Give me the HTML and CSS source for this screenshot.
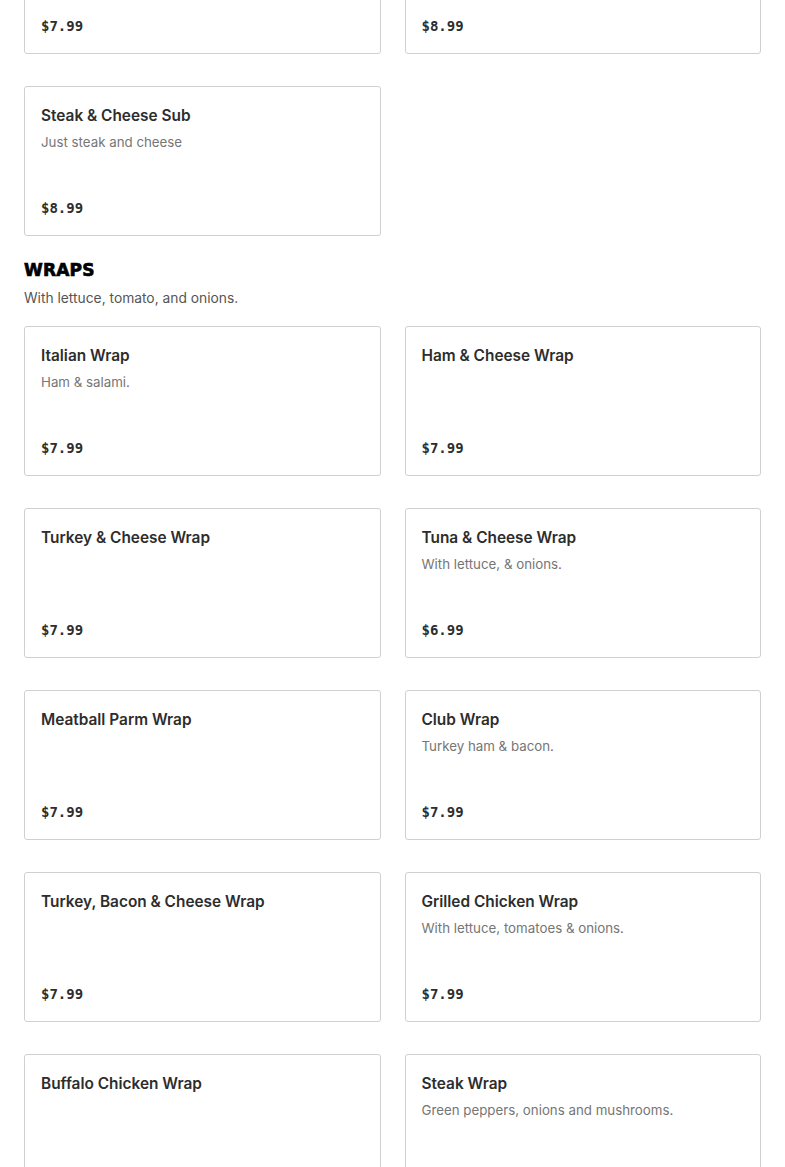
FILE: index.html
```html
<!DOCTYPE html>
<html>
<head>
<meta charset="utf-8">
<link rel="stylesheet" href="styles.css">
</head>
<body>
<main class="menu">
  <section class="section section-first">
    <div class="grid">
      <div class="card"><div class="title">Cheese Steak Sub</div><div class="desc">With peppers and onions</div><div class="price">$7.99</div></div>
      <div class="card"><div class="title">Chicken Cheese Steak Sub</div><div class="desc">With peppers and onions</div><div class="price">$8.99</div></div>
      <div class="card"><div class="title">Steak &amp; Cheese Sub</div><div class="desc">Just steak and cheese</div><div class="price">$8.99</div></div>
    </div>
  </section>
  <section class="section">
    <h2 class="section-title">WRAPS</h2>
    <p class="section-desc">With lettuce, tomato, and onions.</p>
    <div class="grid">
      <div class="card"><div class="title">Italian Wrap</div><div class="desc">Ham &amp; salami.</div><div class="price">$7.99</div></div>
      <div class="card"><div class="title">Ham &amp; Cheese Wrap</div><div class="price">$7.99</div></div>
      <div class="card"><div class="title">Turkey &amp; Cheese Wrap</div><div class="price">$7.99</div></div>
      <div class="card"><div class="title">Tuna &amp; Cheese Wrap</div><div class="desc">With lettuce, &amp; onions.</div><div class="price">$6.99</div></div>
      <div class="card"><div class="title">Meatball Parm Wrap</div><div class="price">$7.99</div></div>
      <div class="card"><div class="title">Club Wrap</div><div class="desc">Turkey ham &amp; bacon.</div><div class="price">$7.99</div></div>
      <div class="card"><div class="title">Turkey, Bacon &amp; Cheese Wrap</div><div class="price">$7.99</div></div>
      <div class="card"><div class="title">Grilled Chicken Wrap</div><div class="desc">With lettuce, tomatoes &amp; onions.</div><div class="price">$7.99</div></div>
      <div class="card"><div class="title">Buffalo Chicken Wrap</div><div class="price">$7.99</div></div>
      <div class="card"><div class="title">Steak Wrap</div><div class="desc">Green peppers, onions and mushrooms.</div><div class="price">$8.99</div></div>
    </div>
  </section>
</main>
</body>
</html>
```
FILE: styles.css
```css
html, body {
  margin: 0;
  padding: 0;
  background: #fff;
  overflow: hidden;
}
body {
  font-family: Inter, "Liberation Sans", sans-serif;
  color: #2d2d2d;
}
.menu {
  padding: 0 24px;
}
.section-first {
  margin-top: -96px;
}
.grid {
  display: grid;
  grid-template-columns: 1fr 1fr;
  column-gap: 24px;
  row-gap: 32px;
}
.card {
  box-sizing: border-box;
  height: 150px;
  border: 1px solid #d0d0d0;
  border-radius: 3px;
  padding: 17px 16px 17px;
  display: flex;
  flex-direction: column;
}
.title {
  font-size: 15.4px;
  font-weight: 600;
  line-height: 24px;
  color: #2d2d2d;
}
.desc {
  margin-top: 4px;
  font-size: 13.3px;
  line-height: 20px;
  color: #767676;
}
.price {
  margin-top: auto;
  font-family: "DejaVu Sans Mono", "Liberation Mono", monospace;
  font-weight: bold;
  font-size: 14px;
  line-height: 20px;
  color: #2d2d2d;
}
.section-title {
  margin: 22px 0 0;
  font-family: "DejaVu Sans", sans-serif;
  font-weight: 900;
  font-size: 17px;
  line-height: 24px;
  letter-spacing: 0.2px;
  -webkit-text-stroke: 0.7px #000;
  color: #000;
}
.section-desc {
  margin: 6px 0 18px;
  font-size: 13.8px;
  line-height: 20px;
  color: #555;
}
```
